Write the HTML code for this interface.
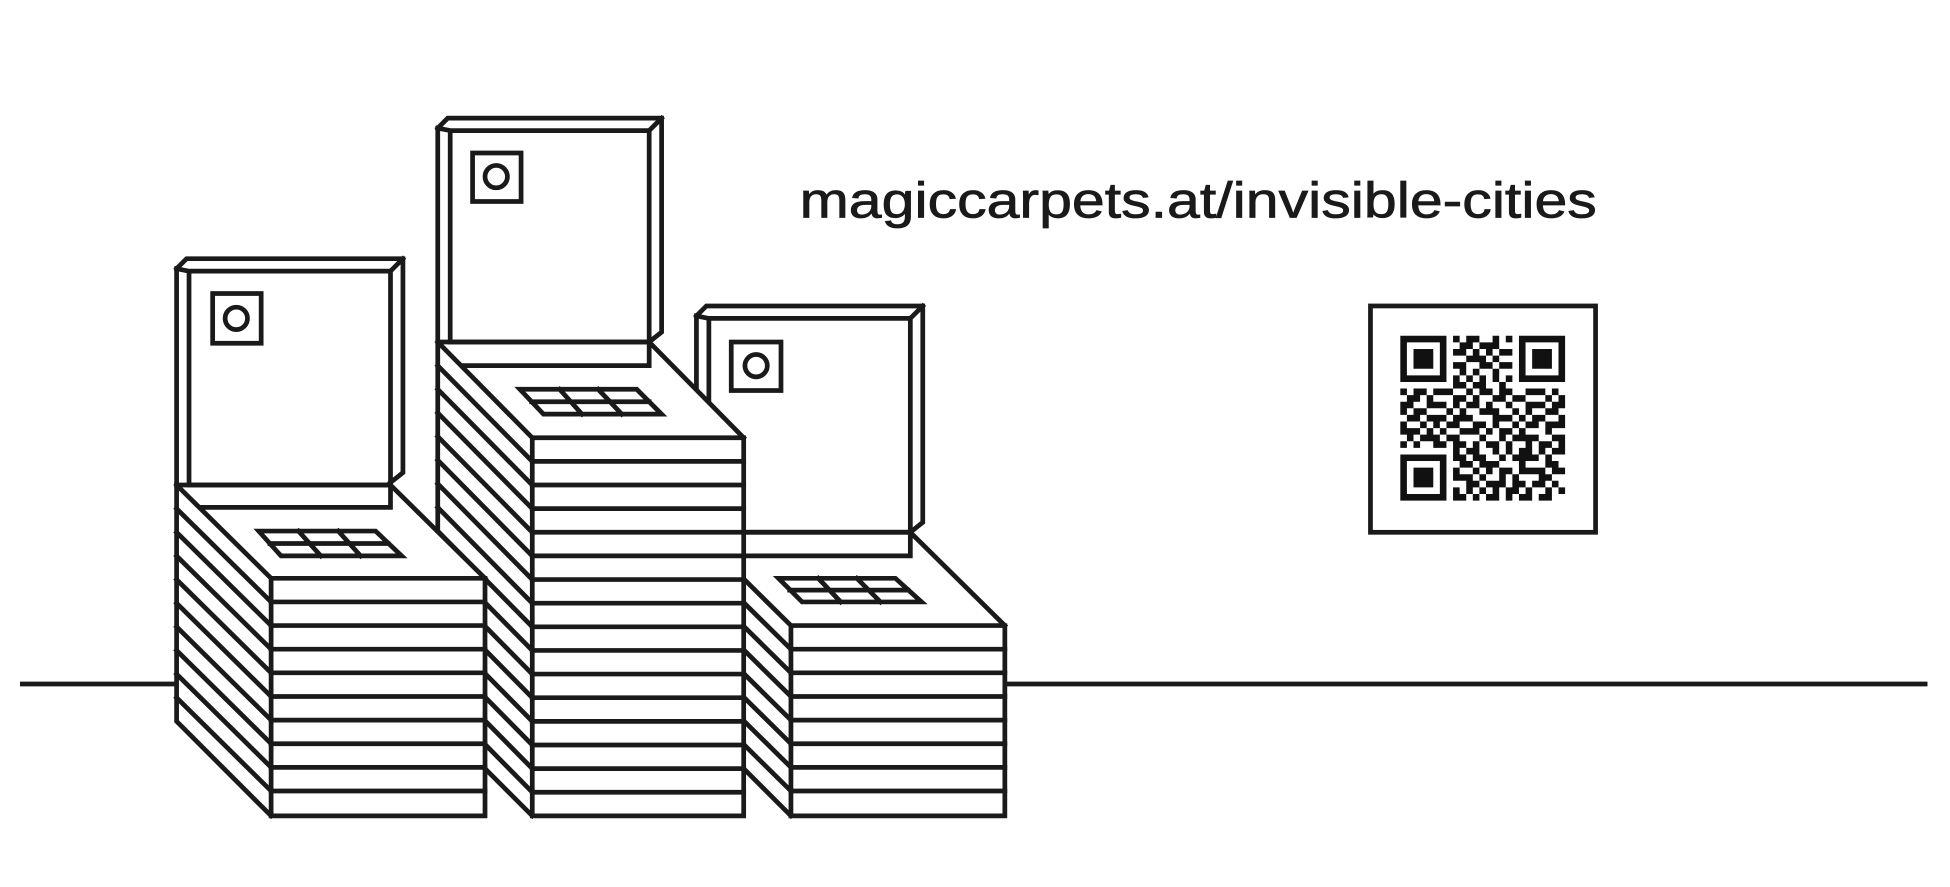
<!DOCTYPE html>
<html><head><meta charset="utf-8"><style>
html,body{margin:0;padding:0;background:#fff;width:1950px;height:887px;overflow:hidden}
svg{display:block}
</style></head><body>
<svg width="1950" height="887" viewBox="0 0 1568 713.2" xmlns="http://www.w3.org/2000/svg">
<g fill="none" stroke="#1a1a1a" stroke-width="3.8" stroke-linejoin="miter" stroke-linecap="square">
<line x1="18" y1="550" x2="1548" y2="550"/>

<!-- Stack C -->
<g>
<path fill="#fff" stroke="none" d="M560 254L568 246H742V420L732 428V447L808 503V656H636L560 580V428Z"/>
<path d="M560 254L568 246H742V420L732 428M570 256H732V428H570ZM560 254L570 256M742 246L732 256M560 254V428"/>
<rect x="588" y="275" width="40" height="39" fill="#fff"/><circle cx="608" cy="294" r="9"/>
<path d="M560 428H732V447M580 447H732M732 428L808 503M560 428L636 503H808V656H636V503M560 428V580L636 656"/>
<path d="M636 522H808M636 541H808M636 560H808M636 579H808M636 598H808M636 617H808M636 636H808"/>
<path d="M560 447l76 75M560 466l76 75M560 485l76 75M560 504l76 75M560 523l76 75M560 542l76 75M560 561l76 75"/>
<path d="M626 465H720L741 484H645ZM635 474.5H730M658 465L676 484M689 465L708 484"/>
</g>

<!-- Stack B -->
<g>
<path fill="#fff" stroke="none" d="M352 103L360 95H532V267L522 275L598 352V656H428L352 580V275Z"/>
<path d="M352 103L360 95H532V267L522 275M362 105H522V275H362ZM352 103L362 105M532 95L522 105M352 103V275"/>
<rect x="380" y="123" width="39" height="39" fill="#fff"/><circle cx="399" cy="142" r="9"/>
<path d="M352 275H522V294M372 294H522M522 275L598 352M352 275L428 352H598V656H428V352M352 275V580L428 656"/>
<path d="M428 371H598M428 390H598M428 409H598M428 428H598M428 447H598M428 466H598M428 485H598M428 504H598M428 523H598M428 542H598M428 561H598M428 580H598M428 599H598M428 618H598M428 637H598"/>
<path d="M352 294l76 77M352 313l76 77M352 332l76 77M352 351l76 77M352 370l76 77M352 389l76 77M352 408l76 77M352 427l76 77M352 446l76 77M352 465l76 77M352 484l76 77M352 503l76 77M352 522l76 77M352 541l76 77M352 560l76 77"/>
<path d="M418 313H512L532 333H437ZM427.5 323H522M450 313L468 333M481 313L500 333"/>
</g>

<!-- Stack A -->
<g>
<path fill="#fff" stroke="none" d="M142 216L150 208H324V380L314 390L390 465V656H218L142 580V390Z"/>
<path d="M142 216L150 208H324V380L314 388M152 218H314V390H152ZM142 216L152 218M324 208L314 218M142 216V390"/>
<rect x="171" y="236" width="39" height="40" fill="#fff"/><circle cx="190" cy="256" r="9"/>
<path d="M142 390H314V408M161 408H314M314 390L390 465M142 390L218 465H390V656H218V465M142 390V580L218 656"/>
<path d="M218 484H390M218 503H390M218 522H390M218 541H390M218 560H390M218 579H390M218 598H390M218 617H390M218 636H390"/>
<path d="M142 409l76 75M142 428l76 75M142 447l76 75M142 466l76 75M142 485l76 75M142 504l76 75M142 523l76 75M142 542l76 75M142 561l76 75"/>
<path d="M208 427H302L323 447H226ZM217 437H312M240 427L258 447M272 427L290 447"/>
</g>

<rect x="1102" y="246" width="181" height="182"/>
</g>

<text x="643" y="175" font-family="Liberation Sans, sans-serif" font-size="40" fill="#1a1a1a" stroke="#1a1a1a" stroke-width="0.6" textLength="641" lengthAdjust="spacingAndGlyphs">magiccarpets.at/invisible-cities</text>

<g transform="translate(1126 270) scale(5.3)" fill="#111">
<path d="
M0 0h7v1h-7zM8 0h1v1h-1zM10 0h2v1h-2zM14 0h1v1h-1zM16 0h1v1h-1zM18 0h7v1h-7z
M0 1h1v1h-1zM6 1h1v1h-1zM9 1h2v1h-2zM12 1h3v1h-3zM18 1h1v1h-1zM24 1h1v1h-1z
M0 2h1v1h-1zM2 2h3v1h-3zM6 2h1v1h-1zM8 2h2v1h-2zM11 2h1v1h-1zM13 2h1v1h-1zM15 2h2v1h-2zM18 2h1v1h-1zM20 2h3v1h-3zM24 2h1v1h-1z
M0 3h1v1h-1zM2 3h3v1h-3zM6 3h1v1h-1zM10 3h3v1h-3zM14 3h1v1h-1zM18 3h1v1h-1zM20 3h3v1h-3zM24 3h1v1h-1z
M0 4h1v1h-1zM2 4h3v1h-3zM6 4h1v1h-1zM8 4h2v1h-2zM12 4h2v1h-2zM15 4h2v1h-2zM18 4h1v1h-1zM20 4h3v1h-3zM24 4h1v1h-1z
M0 5h1v1h-1zM6 5h1v1h-1zM9 5h1v1h-1zM11 5h1v1h-1zM14 5h1v1h-1zM18 5h1v1h-1zM24 5h1v1h-1z
M0 6h7v1h-7zM8 6h1v1h-1zM10 6h1v1h-1zM12 6h1v1h-1zM14 6h1v1h-1zM16 6h1v1h-1zM18 6h7v1h-7z
M8 7h2v1h-2zM11 7h2v1h-2zM15 7h1v1h-1z
M0 8h1v1h-1zM2 8h2v1h-2zM5 8h3v1h-3zM10 8h1v1h-1zM12 8h2v1h-2zM15 8h2v1h-2zM19 8h3v1h-3zM23 8h1v1h-1z
M1 9h2v1h-2zM4 9h1v1h-1zM8 9h2v1h-2zM11 9h1v1h-1zM14 9h2v1h-2zM17 9h2v1h-2zM22 9h1v1h-1zM24 9h1v1h-1z
M0 10h2v1h-2zM4 10h3v1h-3zM8 10h1v1h-1zM10 10h2v1h-2zM13 10h1v1h-1zM16 10h1v1h-1zM19 10h3v1h-3zM23 10h2v1h-2z
M0 11h1v1h-1zM2 11h2v1h-2zM7 11h1v1h-1zM9 11h1v1h-1zM12 11h3v1h-3zM17 11h1v1h-1zM19 11h1v1h-1zM22 11h2v1h-2z
M1 12h2v1h-2zM4 12h3v1h-3zM8 12h3v1h-3zM14 12h3v1h-3zM18 12h1v1h-1zM20 12h2v1h-2zM24 12h1v1h-1z
M0 13h1v1h-1zM3 13h1v1h-1zM5 13h1v1h-1zM7 13h2v1h-2zM11 13h2v1h-2zM14 13h1v1h-1zM17 13h1v1h-1zM19 13h2v1h-2zM22 13h3v1h-3z
M0 14h3v1h-3zM4 14h1v1h-1zM6 14h1v1h-1zM9 14h3v1h-3zM13 14h1v1h-1zM15 14h2v1h-2zM18 14h1v1h-1zM22 14h1v1h-1z
M1 15h1v1h-1zM3 15h3v1h-3zM7 15h2v1h-2zM12 15h1v1h-1zM15 15h1v1h-1zM17 15h4v1h-4zM23 15h2v1h-2z
M0 16h1v1h-1zM2 16h1v1h-1zM5 16h2v1h-2zM8 16h2v1h-2zM11 16h1v1h-1zM13 16h2v1h-2zM16 16h1v1h-1zM19 16h1v1h-1zM21 16h2v1h-2zM24 16h1v1h-1z
M8 17h1v1h-1zM10 17h2v1h-2zM14 17h1v1h-1zM16 17h1v1h-1zM18 17h2v1h-2zM21 17h1v1h-1zM23 17h2v1h-2z
M0 18h7v1h-7zM8 18h2v1h-2zM11 18h2v1h-2zM15 18h1v1h-1zM17 18h4v1h-4zM22 18h1v1h-1z
M0 19h1v1h-1zM6 19h1v1h-1zM9 19h2v1h-2zM12 19h3v1h-3zM18 19h1v1h-1zM22 19h2v1h-2z
M0 20h1v1h-1zM2 20h3v1h-3zM6 20h1v1h-1zM8 20h1v1h-1zM11 20h1v1h-1zM13 20h1v1h-1zM15 20h2v1h-2zM18 20h4v1h-4zM23 20h2v1h-2z
M0 21h1v1h-1zM2 21h3v1h-3zM6 21h1v1h-1zM8 21h3v1h-3zM12 21h1v1h-1zM15 21h1v1h-1zM17 21h1v1h-1zM21 21h2v1h-2z
M0 22h1v1h-1zM2 22h3v1h-3zM6 22h1v1h-1zM10 22h2v1h-2zM13 22h3v1h-3zM17 22h2v1h-2zM20 22h2v1h-2zM23 22h1v1h-1z
M0 23h1v1h-1zM6 23h1v1h-1zM8 23h1v1h-1zM10 23h1v1h-1zM12 23h1v1h-1zM14 23h1v1h-1zM16 23h2v1h-2zM19 23h1v1h-1zM22 23h1v1h-1zM24 23h1v1h-1z
M0 24h7v1h-7zM8 24h2v1h-2zM11 24h1v1h-1zM13 24h2v1h-2zM16 24h1v1h-1zM18 24h2v1h-2zM21 24h2v1h-2z"/>
</g>
</svg>
</body></html>
